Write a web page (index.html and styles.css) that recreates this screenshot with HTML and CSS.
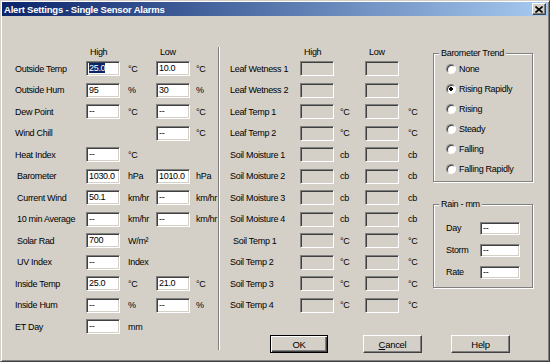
FILE: index.html
```html
<!DOCTYPE html>
<html lang="en">
<head>
    <meta charset="UTF-8">
    <title>Alert Settings - Single Sensor Alarms</title>
    <link rel="stylesheet" href="styles.css">
</head>
<body>

<div class="window">
    <div class="titlebar">
        <span class="title">Alert Settings - Single Sensor Alarms</span>
        <span class="close">
            <svg width="8" height="7" viewBox="0 0 8 7"><path d="M0.5 0.5 L7.5 6.5 M7.5 0.5 L0.5 6.5" stroke="#000" stroke-width="1.6" fill="none"/></svg>
        </span>
    </div>

    <div class="content">
        <!-- 屋外・室内センサー -->
        <div class="grid main-grid">
            <span></span><span class="head">High</span><span></span><span class="head">Low</span><span></span>

            <span class="lbl">Outside Temp</span><span class="field"><span class="sel">25.0</span></span><span>°C</span><span class="field">10.0</span><span>°C</span>
            <span class="lbl">Outside Hum</span><span class="field">95</span><span>%</span><span class="field">30</span><span>%</span>
            <span class="lbl">Dew Point</span><span class="field">--</span><span>°C</span><span class="field">--</span><span>°C</span>
            <span class="lbl">Wind Chill</span><span></span><span></span><span class="field">--</span><span>°C</span>
            <span class="lbl">Heat Index</span><span class="field">--</span><span>°C</span><span></span><span></span>
            <span class="lbl in">Barometer</span><span class="field">1030.0</span><span>hPa</span><span class="field">1010.0</span><span>hPa</span>
            <span class="lbl in">Current Wind</span><span class="field">50.1</span><span>km/hr</span><span class="field">--</span><span>km/hr</span>
            <span class="lbl in">10 min Average</span><span class="field">--</span><span>km/hr</span><span class="field">--</span><span>km/hr</span>
            <span class="lbl in">Solar Rad</span><span class="field">700</span><span>W/m²</span><span></span><span></span>
            <span class="lbl in">UV Index</span><span class="field">--</span><span>Index</span><span></span><span></span>
            <span class="lbl">Inside Temp</span><span class="field">25.0</span><span>°C</span><span class="field">21.0</span><span>°C</span>
            <span class="lbl">Inside Hum</span><span class="field">--</span><span>%</span><span class="field">--</span><span>%</span>
            <span class="lbl">ET Day</span><span class="field">--</span><span>mm</span><span></span><span></span>
        </div>

        <div class="divider"></div>

        <div class="right-area">
            <div class="top">
                <!-- 追加センサー (無効) -->
                <div class="grid extra-grid">
                    <span></span><span class="head">High</span><span></span><span class="head">Low</span><span></span>

                    <span class="lbl">Leaf Wetness 1</span><span class="field off"></span><span></span><span class="field off"></span><span></span>
                    <span class="lbl">Leaf Wetness 2</span><span class="field off"></span><span></span><span class="field off"></span><span></span>
                    <span class="lbl">Leaf Temp 1</span><span class="field off"></span><span>°C</span><span class="field off"></span><span>°C</span>
                    <span class="lbl">Leaf Temp 2</span><span class="field off"></span><span>°C</span><span class="field off"></span><span>°C</span>
                    <span class="lbl">Soil Moisture 1</span><span class="field off"></span><span>cb</span><span class="field off"></span><span>cb</span>
                    <span class="lbl">Soil Moisture 2</span><span class="field off"></span><span>cb</span><span class="field off"></span><span>cb</span>
                    <span class="lbl">Soil Moisture 3</span><span class="field off"></span><span>cb</span><span class="field off"></span><span>cb</span>
                    <span class="lbl">Soil Moisture 4</span><span class="field off"></span><span>cb</span><span class="field off"></span><span>cb</span>
                    <span class="lbl in2">Soil Temp 1</span><span class="field off"></span><span>°C</span><span class="field off"></span><span>°C</span>
                    <span class="lbl">Soil Temp 2</span><span class="field off"></span><span>°C</span><span class="field off"></span><span>°C</span>
                    <span class="lbl">Soil Temp 3</span><span class="field off"></span><span>°C</span><span class="field off"></span><span>°C</span>
                    <span class="lbl">Soil Temp 4</span><span class="field off"></span><span>°C</span><span class="field off"></span><span>°C</span>
                </div>

                <div class="side">
                    <fieldset class="group trend">
                        <legend>Barometer Trend</legend>
                        <label class="radio"><input type="radio" name="trend"> None</label>
                        <label class="radio"><input type="radio" name="trend" checked> Rising Rapidly</label>
                        <label class="radio"><input type="radio" name="trend"> Rising</label>
                        <label class="radio"><input type="radio" name="trend"> Steady</label>
                        <label class="radio"><input type="radio" name="trend"> Falling</label>
                        <label class="radio"><input type="radio" name="trend"> Falling Rapidly</label>
                    </fieldset>

                    <fieldset class="group rain">
                        <legend>Rain - mm</legend>
                        <div class="rain-grid">
                            <span>Day</span><span class="field small">--</span>
                            <span>Storm</span><span class="field small">--</span>
                            <span>Rate</span><span class="field small">--</span>
                        </div>
                    </fieldset>
                </div>
            </div>

            <div class="buttons">
                <button class="btn default">OK</button>
                <button class="btn cancel"><u>C</u>ancel</button>
                <button class="btn help">Help</button>
            </div>
        </div>
    </div>
</div>

</body>
</html>
```

FILE: styles.css
```css
* {
    box-sizing: border-box;
}
body {
    margin: 0;
    background: #d4d0c8;
    font-family: "Liberation Sans", Arial, sans-serif;
    font-size: 9px;
    letter-spacing: -0.3px;
    color: #000;
}
.window {
    width: 550px;
    height: 362px;
    padding: 1px;
    border: 1px solid;
    border-color: #d4d0c8 #404040 #404040 #d4d0c8;
    box-shadow: inset 1px 1px #fff, inset -1px -1px #808080;
    display: flex;
    flex-direction: column;
    overflow: hidden;
}
.titlebar {
    height: 14px;
    background: linear-gradient(to right, #0a246a, #a6caf0);
    display: flex;
    align-items: center;
    padding-left: 2px;
}
.title {
    color: #fff;
    font-weight: bold;
    font-size: 9.5px;
    letter-spacing: -0.2px;
}
.close {
    margin-left: auto;
    margin-right: 2px;
    width: 14px;
    height: 12px;
    background: #d4d0c8;
    border: 1px solid;
    border-color: #fff #404040 #404040 #fff;
    box-shadow: inset -1px -1px #808080;
    display: flex;
    align-items: center;
    justify-content: center;
}
.close svg {
    display: block;
}
.content {
    flex: 1;
    display: flex;
    padding-left: 13px;
}

/* 入力グリッド */
.grid {
    display: grid;
    grid-template-rows: 13px;
    grid-auto-rows: 21.5px;
    align-items: center;
    padding-top: 29px;
    white-space: nowrap;
}
.main-grid {
    width: 203px;
    grid-template-columns: 71px 34px 36px 34px 28px;
}
.main-grid > :nth-child(5n+3) {
    padding-left: 8px;
}
.main-grid > :nth-child(5n) {
    padding-left: 6px;
}
.extra-grid {
    width: 213px;
    padding-left: 10px;
    grid-template-columns: 70px 34px 31px 34px 34px;
}
.extra-grid > :nth-child(5n+3) {
    padding-left: 6px;
}
.extra-grid > :nth-child(5n) {
    padding-left: 9px;
}
.head {
    padding-left: 4px;
}
.in {
    padding-left: 2px;
}
.in2 {
    padding-left: 3px;
}
.field {
    display: block;
    height: 15px;
    line-height: 13px;
    padding-left: 2px;
    background: #fff;
    border: 1px solid;
    border-color: #808080 #fff #fff #808080;
    box-shadow: inset 1px 1px #404040, inset -1px -1px #d4d0c8;
    overflow: hidden;
}
.field.off {
    background: #d4d0c8;
}
.field.small {
    height: 13px;
    line-height: 11px;
}
.sel {
    background: #0a246a;
    color: #fff;
}

.divider {
    width: 2px;
    border-left: 1px solid #808080;
    border-right: 1px solid #fff;
    margin: 31px 0 10px;
}
.right-area {
    display: flex;
    flex-direction: column;
}
.top {
    display: flex;
}

/* グループボックス */
.side {
    width: 100px;
    margin-top: 31px;
}
.group {
    margin: 0;
    border: 1px solid #808080;
    box-shadow: 1px 1px #fff, inset 1px 1px #fff;
    padding: 0 0 2px 12px;
}
.group legend {
    padding: 0 2px;
    margin-left: -7px;
    line-height: 12px;
    background: #d4d0c8;
}
.radio {
    display: flex;
    align-items: center;
    height: 20px;
    white-space: nowrap;
}
.radio input {
    appearance: none;
    width: 10px;
    height: 10px;
    margin: 0 3px 0 0;
    border-radius: 50%;
    border: 1px solid;
    border-color: #808080 #fff #fff #808080;
    box-shadow: inset 1px 1px #404040;
    background: #fff;
}
.radio input:checked {
    background: radial-gradient(circle, #000 0 1.6px, #fff 2px);
}
.rain {
    margin-top: 16px;
    padding: 7px 0 4px 12px;
}
.rain-grid {
    display: grid;
    grid-template-columns: 34px 40px;
    grid-auto-rows: 22px;
    align-items: center;
}

/* ボタン */
.buttons {
    display: flex;
    margin-top: 19px;
    padding-left: 50px;
}
.btn {
    width: 59px;
    height: 18px;
    padding: 0;
    font-family: inherit;
    font-size: 9.5px;
    letter-spacing: inherit;
    color: #000;
    background: #d4d0c8;
    border: 1px solid;
    border-color: #fff #404040 #404040 #fff;
    box-shadow: inset -1px -1px #808080;
}
.btn.default {
    width: 58px;
    border-color: #000;
    box-shadow: inset 1px 1px #fff, inset -1px -1px #404040, inset -2px -2px #808080;
}
.cancel {
    margin-left: 35px;
}
.help {
    margin-left: 29px;
}
```
